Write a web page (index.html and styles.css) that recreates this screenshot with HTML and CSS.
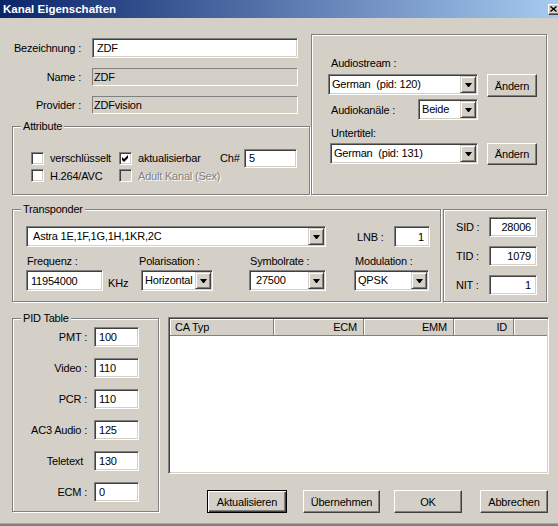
FILE: index.html
```html
<!DOCTYPE html>
<html lang="de">
<head>
    <meta charset="UTF-8">
    <title>Kanal Eigenschaften</title>
    <link rel="stylesheet" href="styles.css">
</head>
<body>
    <div class="titlebar">
        <span class="title">Kanal Eigenschaften</span>
        <span class="close-btn">
            <svg width="7" height="6" viewBox="0 0 7 6"><path d="M0.5 0.5 L6.5 5.5 M6.5 0.5 L0.5 5.5" stroke="#000" stroke-width="1.4" fill="none"/></svg>
        </span>
    </div>

    <div class="client">
        <!-- Name / Attribute / Audio -->
        <div class="top">
            <div class="left-col">
                <div class="field f1">
                    <span class="lbl">Bezeichnung :</span>
                    <input class="edit name-edit" type="text" value="ZDF">
                </div>
                <div class="field f2">
                    <span class="lbl">Name :</span>
                    <div class="static">ZDF</div>
                </div>
                <div class="field f3">
                    <span class="lbl">Provider :</span>
                    <div class="static">ZDFvision</div>
                </div>

                <div class="group attr">
                    <span class="legend">Attribute</span>
                    <div class="attr-row">
                        <div class="chk-item c1"><span class="check"></span>verschlüsselt</div>
                        <div class="chk-item c2">
                            <span class="check">
                                <svg width="7" height="7" viewBox="0 0 7 7"><polygon points="0,2 2,4 6,0 6,3 2,7 0,5" fill="#000"/></svg>
                            </span>aktualisierbar
                        </div>
                        <span class="ch-lbl">Ch#</span>
                        <input class="edit ch-edit" type="text" value="5">
                    </div>
                    <div class="attr-row row2">
                        <div class="chk-item c1"><span class="check"></span>H.264/AVC</div>
                        <div class="chk-item c2"><span class="check disabled"></span><span class="grayed">Adult Kanal (Sex)</span></div>
                    </div>
                </div>
            </div>

            <div class="group audio">
                <div class="cap">Audiostream :</div>
                <div class="audio-row">
                    <div class="combo w-stream"><span class="combo-text">German  (pid: 120)</span><span class="drop"><svg width="7" height="4" viewBox="0 0 7 4"><polygon points="0,0 7,0 4,4 3,4" fill="#000"/></svg></span></div>
                    <button class="btn change">Ändern</button>
                </div>
                <div class="kanal-row">
                    <span class="kanal-lbl">Audiokanäle :</span>
                    <div class="combo w-kanal"><span class="combo-text">Beide</span><span class="drop"><svg width="7" height="4" viewBox="0 0 7 4"><polygon points="0,0 7,0 4,4 3,4" fill="#000"/></svg></span></div>
                </div>
                <div class="cap cap2">Untertitel:</div>
                <div class="audio-row row-sub">
                    <div class="combo w-sub"><span class="combo-text">German  (pid: 131)</span><span class="drop"><svg width="7" height="4" viewBox="0 0 7 4"><polygon points="0,0 7,0 4,4 3,4" fill="#000"/></svg></span></div>
                    <button class="btn change change2">Ändern</button>
                </div>
            </div>
        </div>

        <!-- Transponder / IDs -->
        <div class="middle">
            <div class="group transponder">
                <span class="legend">Transponder</span>
                <div class="tp-row1">
                    <div class="combo editable w-astra"><span class="combo-text">Astra 1E,1F,1G,1H,1KR,2C</span><span class="drop"><svg width="7" height="4" viewBox="0 0 7 4"><polygon points="0,0 7,0 4,4 3,4" fill="#000"/></svg></span></div>
                    <span class="lnb-lbl">LNB :</span>
                    <input class="edit num lnb-edit" type="text" value="1">
                </div>
                <div class="tp-labels">
                    <span class="tp-col col1 tl1">Frequenz :</span>
                    <span class="tp-col col2 tl2">Polarisation :</span>
                    <span class="tp-col col3 tl3">Symbolrate :</span>
                    <span class="tp-col col4 tl4">Modulation :</span>
                </div>
                <div class="tp-inputs">
                    <div class="tp-col col1 freq">
                        <input class="edit freq-edit" type="text" value="11954000">
                        <span class="khz">KHz</span>
                    </div>
                    <div class="tp-col col2">
                        <div class="combo w-pol"><span class="combo-text">Horizontal</span><span class="drop"><svg width="7" height="4" viewBox="0 0 7 4"><polygon points="0,0 7,0 4,4 3,4" fill="#000"/></svg></span></div>
                    </div>
                    <div class="tp-col col3">
                        <div class="combo editable w-sym"><span class="combo-text">27500</span><span class="drop"><svg width="7" height="4" viewBox="0 0 7 4"><polygon points="0,0 7,0 4,4 3,4" fill="#000"/></svg></span></div>
                    </div>
                    <div class="tp-col col4">
                        <div class="combo w-mod"><span class="combo-text">QPSK</span><span class="drop"><svg width="7" height="4" viewBox="0 0 7 4"><polygon points="0,0 7,0 4,4 3,4" fill="#000"/></svg></span></div>
                    </div>
                </div>
            </div>

            <div class="group ids">
                <div class="id-row"><span class="id-lbl">SID :</span><input class="edit num id-edit" type="text" value="28006"></div>
                <div class="id-row"><span class="id-lbl">TID :</span><input class="edit num id-edit" type="text" value="1079"></div>
                <div class="id-row"><span class="id-lbl">NIT :</span><input class="edit num id-edit" type="text" value="1"></div>
            </div>
        </div>

        <!-- PID table / CA list / buttons -->
        <div class="bottom">
            <div class="group pids">
                <span class="legend">PID Table</span>
                <div class="pid-row"><span class="pid-lbl">PMT :</span><input class="edit pid-edit" type="text" value="100"></div>
                <div class="pid-row"><span class="pid-lbl">Video :</span><input class="edit pid-edit" type="text" value="110"></div>
                <div class="pid-row"><span class="pid-lbl">PCR :</span><input class="edit pid-edit" type="text" value="110"></div>
                <div class="pid-row"><span class="pid-lbl">AC3 Audio :</span><input class="edit pid-edit" type="text" value="125"></div>
                <div class="pid-row"><span class="pid-lbl tt">Teletext</span><input class="edit pid-edit" type="text" value="130"></div>
                <div class="pid-row"><span class="pid-lbl">ECM :</span><input class="edit pid-edit" type="text" value="0"></div>
            </div>

            <div class="right-col">
                <div class="list">
                    <div class="list-head">
                        <span class="hcell h-type">CA Typ</span>
                        <span class="hcell h-num">ECM</span>
                        <span class="hcell h-num">EMM</span>
                        <span class="hcell h-id">ID</span>
                        <span class="hcell h-rest"></span>
                    </div>
                </div>
                <div class="buttons">
                    <button class="btn default b-refresh">Aktualisieren</button>
                    <button class="btn b-apply">Übernehmen</button>
                    <button class="btn b-ok">OK</button>
                    <button class="btn b-cancel">Abbrechen</button>
                </div>
            </div>
        </div>
    </div>
    <div class="frame-bottom"></div>
</body>
</html>
```

FILE: styles.css
```css
* {
    box-sizing: border-box;
}
body {
    margin: 0;
    width: 558px;
    height: 526px;
    overflow: hidden;
    background-color: #d4d0c8;
    font-family: "Liberation Sans", Arial, sans-serif;
    font-size: 11px;
    letter-spacing: -0.2px;
    white-space: nowrap;
    color: #000;
}

/* title bar */
.titlebar {
    height: 18px;
    background: linear-gradient(to right, #0a246a, #a6caf0);
    display: flex;
    align-items: center;
    justify-content: space-between;
    overflow: hidden;
}
.title {
    color: #fff;
    font-weight: bold;
    font-size: 11.5px;
    letter-spacing: 0;
    padding-left: 3px;
}
.close-btn {
    width: 12px;
    height: 11px;
    margin-right: -2px;
    background-color: #d4d0c8;
    border: 1px solid;
    border-color: #fff #404040 #404040 #fff;
    box-shadow: inset -1px -1px #808080;
    display: flex;
    align-items: center;
    padding-left: 1px;
}

.client {
    padding: 16px 0 0 12px;
}

/* common controls */
.group {
    position: relative;
    border: 1px solid #808080;
    box-shadow: inset 1px 1px #fff, 1px 1px #fff;
}
.legend {
    position: absolute;
    top: -7px;
    left: 8px;
    padding: 0 2px;
    line-height: 13px;
    background-color: #d4d0c8;
}
.edit {
    margin: 0;
    height: 20px;
    padding: 0 0 0 4px;
    background-color: #fff;
    border: 1px solid;
    border-color: #808080 #fff #fff #808080;
    box-shadow: inset 1px 1px #404040, inset -1px -1px #d4d0c8;
    font: inherit;
    letter-spacing: inherit;
    color: #000;
    outline: none;
}
.edit.num {
    text-align: right;
    padding: 0 5px 0 0;
}
.static {
    width: 206px;
    height: 18px;
    padding-left: 1px;
    line-height: 17px;
    border: 1px solid;
    border-color: #808080 #fff #fff #808080;
}
.combo {
    display: flex;
    height: 21px;
    padding: 1px;
    background-color: #fff;
    border: 1px solid;
    border-color: #808080 #fff #fff #808080;
    box-shadow: inset 1px 1px #404040, inset -1px -1px #d4d0c8;
}
.combo-text {
    flex: 1;
    padding-left: 2px;
    line-height: 17px;
    white-space: pre;
    overflow: hidden;
}
.combo.editable .combo-text {
    padding-left: 5px;
}
.drop {
    width: 16px;
    background-color: #d4d0c8;
    border: 1px solid;
    border-color: #d4d0c8 #404040 #404040 #d4d0c8;
    box-shadow: inset 1px 1px #fff, inset -1px -1px #808080;
    display: flex;
    align-items: center;
    justify-content: center;
}
.btn {
    margin: 0;
    height: 23px;
    padding: 0;
    background-color: #d4d0c8;
    border: 1px solid;
    border-color: #fff #404040 #404040 #fff;
    box-shadow: inset -1px -1px #808080;
    font: inherit;
    letter-spacing: inherit;
    color: #000;
}
.btn.default {
    border-color: #000;
    box-shadow: inset 1px 1px #fff, inset -1px -1px #404040, inset -2px -2px #808080;
}
.check {
    width: 13px;
    height: 13px;
    margin-right: 6px;
    flex: none;
    background-color: #fff;
    border: 1px solid;
    border-color: #808080 #fff #fff #808080;
    box-shadow: inset 1px 1px #404040, inset -1px -1px #d4d0c8;
    display: flex;
    align-items: center;
    justify-content: center;
}
.check.disabled {
    background-color: #d4d0c8;
}
.grayed {
    color: #808080;
    text-shadow: 1px 1px #fff;
}

/* top part */
.top {
    display: flex;
    height: 162px;
}
.left-col {
    width: 299px;
}
.field {
    display: flex;
    align-items: center;
}
.field .lbl {
    width: 69px;
    margin-right: 11px;
    text-align: right;
}
.f1 {
    margin-top: 4px;
    height: 20px;
}
.f2, .f3 {
    margin-top: 10px;
    height: 18px;
}
.name-edit {
    width: 206px;
}
.attr {
    margin-top: 12px;
    width: 298px;
    height: 69px;
    padding: 22px 0 0 18px;
}
.attr-row {
    display: flex;
    align-items: center;
    height: 18px;
}
.attr-row.row2 {
    height: 17px;
}
.chk-item {
    display: flex;
    align-items: center;
}
.c1 {
    width: 88px;
}
.c2 {
    width: 101px;
}
.ch-lbl {
    width: 24px;
}
.ch-edit {
    width: 53px;
    height: 19px;
}

.audio {
    width: 236px;
    height: 161px;
    padding: 22px 0 0 16px;
}
.cap {
    padding-left: 3px;
    line-height: 13px;
}
.audio-row {
    display: flex;
    margin-top: 4px;
}
.w-stream {
    width: 150px;
}
.change {
    width: 50px;
    margin-left: 9px;
}
.kanal-row {
    display: flex;
    align-items: center;
    margin-top: 2px;
}
.kanal-lbl {
    width: 90px;
    padding-left: 3px;
}
.w-kanal {
    width: 60px;
}
.cap2 {
    margin-top: 7px;
}
.row-sub {
    margin-top: 3px;
}
.w-sub {
    width: 148px;
    margin-left: 2px;
}
.change2 {
    height: 22px;
}

/* transponder */
.middle {
    display: flex;
    height: 94px;
    margin-top: 13px;
}
.transponder {
    width: 429px;
    height: 93px;
    padding: 16px 0 0 13px;
}
.tp-row1 {
    display: flex;
    align-items: center;
    height: 21px;
}
.w-astra {
    width: 300px;
}
.lnb-lbl {
    width: 37px;
    margin-left: 31px;
}
.lnb-edit {
    width: 36px;
    height: 21px;
}
.tp-labels {
    display: flex;
    margin-top: 8px;
    line-height: 13px;
}
.tp-inputs {
    display: flex;
    margin-top: 2px;
}
.col1 { width: 115px; }
.col2 { width: 108px; }
.col3 { width: 105px; }
.tl1 { padding-left: 1px; }
.tl2 { margin-left: -2px; margin-right: 2px; }
.tl3, .tl4 { padding-left: 1px; }
.freq {
    display: flex;
    align-items: center;
}
.freq-edit {
    width: 77px;
    height: 21px;
}
.khz {
    margin-left: 5px;
    padding-top: 4px;
}
.w-pol { width: 72px; }
.w-sym { width: 77px; }
.w-mod { width: 75px; }

.ids {
    width: 104px;
    height: 93px;
    margin-left: 2px;
    padding: 7px 0 0 12px;
}
.id-row {
    display: flex;
    align-items: center;
    height: 20px;
}
.id-row + .id-row {
    margin-top: 9px;
}
.id-lbl {
    width: 33px;
}
.id-edit {
    width: 48px;
}

/* pid table + list */
.bottom {
    display: flex;
    margin-top: 14px;
}
.pids {
    margin-top: 1px;
    width: 147px;
    height: 194px;
    padding-top: 8px;
}
.pid-row {
    display: flex;
    align-items: center;
    height: 20px;
}
.pid-row + .pid-row {
    margin-top: 11px;
}
.pid-lbl {
    width: 74px;
    margin-right: 7px;
    text-align: right;
}
.pid-lbl.tt {
    padding-right: 4px;
}
.pid-edit {
    width: 45px;
}
.right-col {
    width: 381px;
    margin-left: 9px;
}
.list {
    height: 157px;
    padding: 1px;
    background-color: #fff;
    border: 1px solid;
    border-color: #808080 #fff #fff #808080;
    box-shadow: inset 1px 1px #404040, inset -1px -1px #d4d0c8;
}
.list-head {
    display: flex;
    height: 17px;
}
.hcell {
    height: 17px;
    line-height: 16px;
    padding: 0 5px;
    background-color: #d4d0c8;
    border-right: 1px solid #808080;
    border-bottom: 1px solid #808080;
    box-shadow: inset 1px 1px #fff;
}
.h-type { width: 104px; }
.h-num {
    width: 90px;
    text-align: right;
    padding-right: 6px;
}
.h-id {
    width: 60px;
    text-align: right;
    padding-right: 6px;
}
.h-rest {
    flex: 1;
    border-right: none;
}
.buttons {
    display: flex;
    margin-top: 16px;
}
.b-refresh { width: 80px; margin-left: 39px; }
.b-apply { width: 77px; margin-left: 16px; }
.b-ok { width: 68px; margin-left: 14px; }
.b-cancel { width: 68px; margin-left: 18px; }

.frame-bottom {
    margin-top: 10px;
    height: 3px;
    border-top: 1px solid #a8a8a8;
    background-color: #808080;
}
```
